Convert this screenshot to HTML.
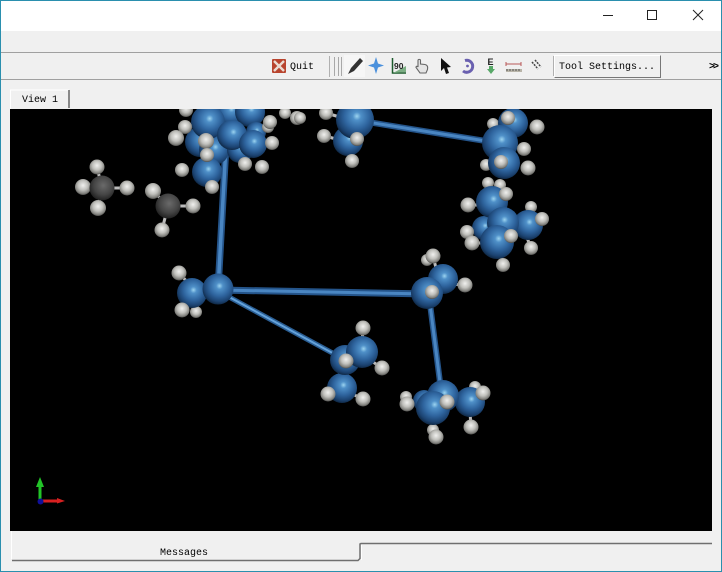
<!DOCTYPE html>
<html><head><meta charset="utf-8"><style>
html,body{margin:0;padding:0;background:#f0f0f0}
#w{position:relative;width:722px;height:572px;overflow:hidden;background:#f0f0f0;font-family:"Liberation Mono",monospace;font-size:10px;color:#000}
.a{position:absolute}
.t{position:absolute;white-space:pre;line-height:12px}
</style></head><body><div id="w">
<div class="a" style="left:0;top:0;width:722px;height:31px;background:#fff"></div>
<div class="a" style="left:0;top:52px;width:722px;height:1px;background:#a0a0a0"></div>
<div class="a" style="left:0;top:79px;width:722px;height:1px;background:#a0a0a0"></div>
<div class="a" style="left:554px;top:55px;width:107px;height:23px;background:#f0f0f0;border-top:1px solid #fff;border-left:1px solid #fff;border-right:1px solid #777;border-bottom:1px solid #777;box-sizing:border-box"></div>
<div class="t" style="left:290px;top:62px">Quit</div>
<div class="t" style="left:559px;top:62px">Tool Settings...</div>
<div class="t" style="left:709px;top:62px;font-weight:bold;letter-spacing:-2px">&gt;&gt;</div>
<div class="t" style="left:22px;top:95px">View 1</div>
<div class="t" style="left:160px;top:548px">Messages</div>
<svg class="a" style="left:0;top:0" width="722" height="572" viewBox="0 0 722 572">
<defs>
<radialGradient id="b" cx=".55" cy=".4" r=".6"><stop offset="0" stop-color="#9cd4f0"/><stop offset=".18" stop-color="#4f90c8"/><stop offset=".55" stop-color="#2f659f"/><stop offset=".85" stop-color="#1b4270"/><stop offset="1" stop-color="#102a48"/></radialGradient>
<radialGradient id="h" cx=".5" cy=".4" r=".6"><stop offset="0" stop-color="#f0f0ee"/><stop offset=".5" stop-color="#c0c0bc"/><stop offset=".85" stop-color="#80807c"/><stop offset="1" stop-color="#4a4a48"/></radialGradient>
<radialGradient id="g" cx=".55" cy=".4" r=".62"><stop offset="0" stop-color="#6a6a6a"/><stop offset=".6" stop-color="#454545"/><stop offset="1" stop-color="#1e1e1e"/></radialGradient>
<clipPath id="c"><rect x="10" y="109" width="702" height="422"/></clipPath>
</defs>
<!-- window border -->
<rect x=".5" y=".5" width="721" height="571" fill="none" stroke="#2a8fae"/>
<!-- caption buttons -->
<path d="M603 15.500H613" stroke="#222" fill="none"/>
<rect x="647.500" y="10.500" width="9" height="9" fill="none" stroke="#222"/>
<path d="M693 10L703 20M703 10L693 20" stroke="#222" fill="none"/>
<!-- toolbar icons -->
<rect x="272" y="59" width="14" height="14" rx="1" fill="#b8442e"/>
<path d="M274 61L284 71M284 61L274 71" stroke="#eadbd2" stroke-width="2.400"/>
<path d="M329.500 56V77" stroke="#b0b0b0"/><path d="M334.500 57V76M338.500 57V76M341.500 57V76" stroke="#a8a8a8"/>
<rect x="344" y="55" width="21" height="22" fill="#f6f6f6"/>
<path d="M348 74L351 68L360 58L363 61L354 71Z" fill="#333"/>
<path d="M376 57L378 63.500L384 65.500L378 67.500L376 74L374 67.500L368 65.500L374 63.500Z" fill="#4a90dc"/>
<path d="M392.500 58V73H406" fill="none" stroke="#1c5a2c" stroke-width="1.500"/><path d="M393 73L406 66V72Z" fill="#7cae84"/>
<text x="394" y="69" font-family="Liberation Sans" font-size="8.500" font-weight="bold" fill="#222">90</text>
<path d="M418 60.500C418 59 420.500 59 420.500 60.500V64L425 64.500C427.500 65 428 67 427.500 69.500L426 73H420L416 67.500C416 66 417.500 66 418 67Z" fill="#e4e4e4" stroke="#666" stroke-width="1.100"/>
<path d="M441 58L441 71L444 68L446 74L449 73L447 67.500L451 67Z" fill="#111"/>
<path d="M465 60.500A6 6 0 1 1 463 71" fill="none" stroke="#6a60b0" stroke-width="3"/><circle cx="467.500" cy="66" r="1.400" fill="#6a60b0"/>
<text x="487.500" y="65" font-family="Liberation Sans" font-size="9" font-weight="bold" fill="#222">E</text>
<path d="M489 66H493V69H495L491 74L487 69H489Z" fill="#58a868"/>
<path d="M506 64H521M506 62V66M521 62V66" stroke="#b85858" fill="none"/>
<rect x="506" y="69" width="16" height="3" fill="#b8b4a8"/><path d="M507 69v2M510 69v2M513 69v2M516 69v2M519 69v2" stroke="#555"/>
<path d="M532 62L538 69M535 60L541 67" stroke="#444" stroke-width="1.500" stroke-dasharray="2 1"/>
<path d="M553.500 56V76" stroke="#b0b0b0"/>
<!-- tab -->
<path d="M10.500 109V90H69" stroke="#fff" fill="none"/>
<path d="M69 90V108" stroke="#666" stroke-width="1.500"/>
<!-- canvas -->
<rect x="10" y="109" width="702" height="422" fill="#000"/>
<g clip-path="url(#c)">
<g stroke-linecap="round">
<path d="M226 145L218 290" stroke="#24548a" stroke-width="7"/><path d="M226 145L218 290" stroke="#4a86c2" stroke-width="3.500"/>
<path d="M355 120L492 142" stroke="#24548a" stroke-width="6"/><path d="M355 120L492 142" stroke="#4a86c2" stroke-width="3"/>
<path d="M218 290L430 294" stroke="#24548a" stroke-width="7"/><path d="M218 290L430 294" stroke="#4a86c2" stroke-width="3"/>
<path d="M218 291L338 356" stroke="#2a5e94" stroke-width="5"/><path d="M218 291L338 356" stroke="#64a2da" stroke-width="2"/>
<path d="M429 296L441 390" stroke="#24548a" stroke-width="6"/><path d="M429 296L441 390" stroke="#4a86c2" stroke-width="3"/>
</g>
<!-- top cluster -->
<g fill="url(#b)">
<circle cx="230" cy="112" r="15"/><circle cx="250" cy="112" r="15"/><circle cx="200" cy="142" r="15"/><circle cx="214" cy="150" r="15"/><circle cx="240" cy="150" r="13"/><circle cx="256" cy="132" r="10"/>
<circle cx="208" cy="122" r="17"/><circle cx="232" cy="135" r="15"/><circle cx="253" cy="144" r="14"/><circle cx="207" cy="172" r="15"/>
</g>
<g fill="url(#h)">
<circle cx="186" cy="110" r="7"/><circle cx="285" cy="113" r="6"/><circle cx="297" cy="118" r="7"/><circle cx="185" cy="127" r="7"/><circle cx="176" cy="138" r="8"/><circle cx="206" cy="141" r="8"/><circle cx="207" cy="155" r="7"/><circle cx="268" cy="127" r="6"/><circle cx="270" cy="122" r="7"/><circle cx="272" cy="143" r="7"/><circle cx="245" cy="164" r="7"/><circle cx="262" cy="167" r="7"/><circle cx="182" cy="170" r="7"/><circle cx="212" cy="187" r="7"/>
</g>
<!-- methane -->
<path d="M102 188L97 167M102 188L83 187M102 188L127 188M102 188L98 208M168 206L153 191M168 206L193 206M168 206L162 230" stroke="#bbb" stroke-width="3"/>
<g fill="url(#h)"><circle cx="97" cy="167" r="7.500"/><circle cx="83" cy="187" r="8"/><circle cx="127" cy="188" r="7.500"/><circle cx="98" cy="208" r="8"/><circle cx="153" cy="191" r="8"/><circle cx="193" cy="206" r="7.500"/><circle cx="162" cy="230" r="7.500"/></g>
<circle cx="102" cy="188" r="12.500" fill="url(#g)"/><circle cx="168" cy="206" r="12.500" fill="url(#g)"/>
<!-- top middle -->
<path d="M326 113L350 120M324 136L345 141M352 161L348 145" stroke="#bbb" stroke-width="3"/>
<g fill="url(#h)"><circle cx="326" cy="113" r="7"/><circle cx="324" cy="136" r="7"/><circle cx="300" cy="118" r="6"/></g>
<g fill="url(#b)"><circle cx="348" cy="141" r="15"/><circle cx="355" cy="120" r="19"/></g>
<g fill="url(#h)"><circle cx="357" cy="139" r="7"/><circle cx="352" cy="161" r="7"/></g>
<!-- top right -->
<g fill="url(#h)"><circle cx="493" cy="124" r="6"/><circle cx="486" cy="165" r="6"/></g>
<g fill="url(#b)"><circle cx="513" cy="123" r="15"/><circle cx="500" cy="143" r="18"/><circle cx="504" cy="163" r="16"/></g>
<g fill="url(#h)"><circle cx="508" cy="118" r="7"/><circle cx="537" cy="127" r="7.500"/><circle cx="524" cy="149" r="7"/><circle cx="528" cy="168" r="7.500"/><circle cx="501" cy="162" r="7"/><circle cx="488" cy="183" r="6"/><circle cx="500" cy="185" r="6"/><circle cx="531" cy="207" r="6"/></g>
<!-- lower right cluster -->
<path d="M468 205L490 205M467 232L490 232M472 243L490 243M503 265L500 250M531 248L526 235" stroke="#bbb" stroke-width="3"/>
<g fill="url(#b)"><circle cx="484" cy="228" r="12"/><circle cx="492" cy="202" r="16"/><circle cx="528" cy="225" r="15"/><circle cx="503" cy="223" r="16"/><circle cx="497" cy="242" r="17"/></g>
<g fill="url(#h)"><circle cx="506" cy="194" r="7"/><circle cx="468" cy="205" r="7.500"/><circle cx="542" cy="219" r="7"/><circle cx="467" cy="232" r="7"/><circle cx="472" cy="243" r="7.500"/><circle cx="511" cy="236" r="7"/><circle cx="531" cy="248" r="7"/><circle cx="503" cy="265" r="7"/></g>
<!-- left center -->
<g fill="url(#h)"><circle cx="196" cy="312" r="6"/></g>
<path d="M179 273L190 285" stroke="#bbb" stroke-width="3"/>
<circle cx="192" cy="293" r="15" fill="url(#b)"/><circle cx="218" cy="289" r="15.500" fill="url(#b)"/>
<g fill="url(#h)"><circle cx="179" cy="273" r="7.500"/><circle cx="182" cy="310" r="7.500"/></g>
<!-- right center -->
<path d="M433 256L437 272M465 285L450 284" stroke="#bbb" stroke-width="3"/>
<g fill="url(#h)"><circle cx="427" cy="260" r="6"/><circle cx="433" cy="256" r="7.500"/></g>
<g fill="url(#b)"><circle cx="443" cy="279" r="15"/><circle cx="427" cy="293" r="16"/></g>
<g fill="url(#h)"><circle cx="432" cy="292" r="7"/><circle cx="465" cy="285" r="7.500"/></g>
<!-- bottom middle -->
<path d="M363 328L362 345M382 368L370 360M328 394L342 390M363 399L348 392" stroke="#bbb" stroke-width="3"/>
<g fill="url(#b)"><circle cx="342" cy="388" r="15"/><circle cx="345" cy="360" r="15"/><circle cx="362" cy="352" r="16"/></g>
<g fill="url(#h)"><circle cx="363" cy="328" r="7.500"/><circle cx="346" cy="361" r="7.500"/><circle cx="382" cy="368" r="7.500"/><circle cx="328" cy="394" r="7.500"/><circle cx="363" cy="399" r="7.500"/></g>
<!-- bottom right -->
<path d="M407 404L425 402M471 427L470 412M436 437L434 420" stroke="#bbb" stroke-width="3"/>
<g fill="url(#h)"><circle cx="406" cy="397" r="6"/><circle cx="475" cy="387" r="6"/><circle cx="433" cy="430" r="6"/></g>
<g fill="url(#b)"><circle cx="424" cy="401" r="11"/><circle cx="470" cy="402" r="15"/><circle cx="443" cy="396" r="16"/><circle cx="433" cy="408" r="17"/></g>
<g fill="url(#h)"><circle cx="407" cy="404" r="7.500"/><circle cx="447" cy="402" r="7.500"/><circle cx="483" cy="393" r="7.500"/><circle cx="471" cy="427" r="7.500"/><circle cx="436" cy="437" r="7.500"/></g>
<!-- axes -->
<path d="M38.500 501V487H36L40 477L44 487H41.500V501Z" fill="#22c428"/>
<path d="M41 499.500H57V498L65 501L57 503.500V502.500H41Z" fill="#d82020"/>
<circle cx="40.500" cy="501.500" r="3" fill="#10109a"/>
</g>
<!-- messages tab -->
<path d="M11.500 531V559" stroke="#fff" fill="none"/>
<path d="M12 560.500H358L360 558.500V544L361 543.500H712" stroke="#6f6f6f" fill="none" stroke-width="1.500"/>
<path d="M361.500 545V560" stroke="#fff"/>
</svg>
</div></body></html>
